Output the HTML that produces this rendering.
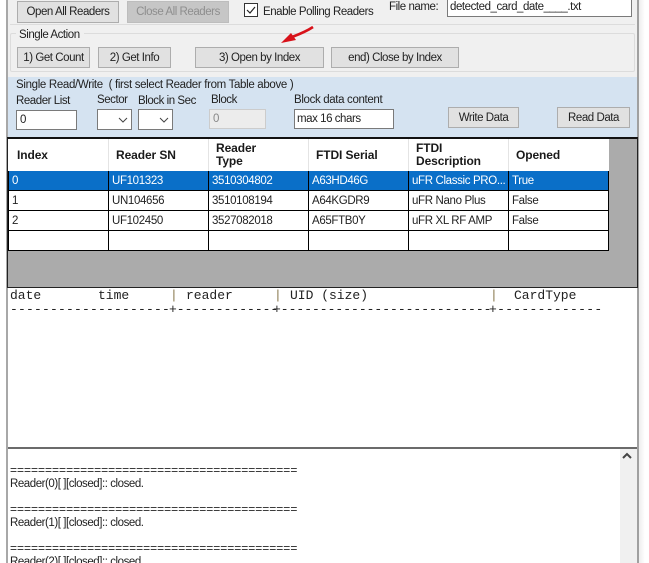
<!DOCTYPE html>
<html><head><meta charset="utf-8"><style>
html,body{margin:0;padding:0;background:#fff}
#r{position:relative;width:649px;height:563px;overflow:hidden;background:#fff;font-family:"Liberation Sans",sans-serif;font-size:11.5px;letter-spacing:-.45px;color:#222;filter:blur(.3px)}
#r div{position:absolute;box-sizing:border-box;white-space:nowrap}
.t{line-height:14px}
.b{background:#e1e1e1;border:1px solid #adadad;text-align:center;line-height:21px;color:#222}
.i{background:#fff;border:1px solid #7a7a7a;padding-left:3px;line-height:18px}
.s{background:#fff;border:1px solid #7a7a7a}
.h{font-weight:bold;font-size:12px;letter-spacing:-.1px;line-height:12.5px;color:#1a1a1a}
.c{font-size:11.5px;line-height:14px;letter-spacing:-.35px}
.m{font-family:"Liberation Mono",monospace;font-size:13px;letter-spacing:0;line-height:15px;color:#222;white-space:pre}
.p{color:#8a7a50}
.v{width:1px;background:#000}
.hl{height:1px;background:#000;left:8px;width:601px}
.g{line-height:13.5px;color:#222}
</style></head><body><div id="r">
<div style="left:0;top:0;width:6px;height:563px;background:#fff"></div>
<div style="left:6px;top:0;width:2px;height:563px;background:#a8a8a8"></div>
<div style="left:8px;top:0;width:629px;height:563px;background:#f0f0f0"></div>
<div style="left:637px;top:0;width:2px;height:563px;background:#a0a0a0"></div>
<div style="left:639px;top:0;width:6px;height:563px;background:linear-gradient(90deg,#eee,#fff)"></div>

<div style="left:10px;top:24px;width:625px;height:1px;background:#dcdcdc"></div>
<div class="b" style="left:17px;top:1px;width:102px;height:22px">Open All Readers</div>
<div class="b" style="left:127px;top:1px;width:102px;height:22px;background:#c6c6c6;border-color:#bdbdbd;color:#8e8e8e">Close All Readers</div>
<div style="left:244px;top:3px;width:14px;height:14px;background:#fff;border:1px solid #333"></div>
<svg style="position:absolute;left:244px;top:3px" width="14" height="14"><path d="M3 7l3 3 5-6" fill="none" stroke="#222" stroke-width="1.2"/></svg>
<div class="t" style="left:263px;top:5px">Enable Polling Readers</div>
<div class="t" style="left:389px;top:0px">File name:</div>
<div class="i" style="left:447px;top:-3px;width:185px;height:20px;padding-left:2px;line-height:18px">detected_card_date____.txt</div>

<div style="left:10px;top:33px;width:625px;height:39px;border:1px solid #dcdcdc;border-radius:2px"></div>
<div class="t" style="left:16px;top:28px;background:#f0f0f0;padding:0 4px 0 3px">Single Action</div>
<div class="b" style="left:17px;top:47px;width:73px;height:21px">1) Get Count</div>
<div class="b" style="left:98px;top:47px;width:73px;height:21px">2) Get Info</div>
<div class="b" style="left:195px;top:47px;width:129px;height:21px">3) Open by Index</div>
<div class="b" style="left:331px;top:47px;width:128px;height:21px">end) Close by Index</div>
<svg style="position:absolute;left:0;top:0" width="649" height="80"><path d="M281 43L291 33 296 40z" fill="#d8121a"/><path d="M292 37C300 34 307 31 313 27" fill="none" stroke="#d8121a" stroke-width="2.6"/></svg>

<div style="left:8px;top:77px;width:629px;height:60px;background:#d5e3f1"></div>
<div class="t" style="left:16px;top:78px;letter-spacing:-.33px">Single Read/Write &nbsp;( first select Reader from Table above )</div>
<div class="t" style="left:16px;top:94px">Reader List</div>
<div class="t" style="left:97px;top:93px">Sector</div>
<div class="t" style="left:138px;top:94px">Block in Sec</div>
<div class="t" style="left:211px;top:93px">Block</div>
<div class="t" style="left:294px;top:93px;letter-spacing:-.35px">Block data content</div>
<div class="i" style="left:16px;top:110px;width:61px;height:20px">0</div>
<div class="s" style="left:97px;top:109px;width:35px;height:21px"></div>
<div class="s" style="left:138px;top:109px;width:35px;height:21px"></div>
<svg style="position:absolute;left:97px;top:109px" width="76" height="21"><path d="M22 9l4 4 4-4M63 9l4 4 4-4" fill="none" stroke="#444"/></svg>
<div class="i" style="left:209px;top:109px;width:57px;height:20px;background:#ececec;border-color:#ccc;color:#888">0</div>
<div class="i" style="left:294px;top:109px;width:100px;height:20px;padding-left:2px">max 16 chars</div>
<div class="b" style="left:448px;top:107px;width:71px;height:21px">Write Data</div>
<div class="b" style="left:557px;top:107px;width:73px;height:21px">Read Data</div>

<div style="left:7px;top:137px;width:631px;height:151px;background:#ababab;border:1px solid #222;border-top:2px solid #111"></div>
<div style="left:8px;top:139px;width:601px;height:112px;background:#fff"></div>
<div style="left:8px;top:171px;width:601px;height:20px;background:#0a6fc8"></div>
<div class="hl" style="top:190px"></div><div class="hl" style="top:210px"></div><div class="hl" style="top:230px"></div><div class="hl" style="top:250px"></div>
<div class="v" style="left:108px;top:171px;height:80px"></div><div class="v" style="left:208px;top:171px;height:80px"></div><div class="v" style="left:308px;top:171px;height:80px"></div><div class="v" style="left:408px;top:171px;height:80px"></div><div class="v" style="left:508px;top:171px;height:80px"></div><div class="v" style="left:608px;top:171px;height:80px"></div>
<div class="v" style="left:108px;top:139px;height:32px;background:#e4e4e4"></div><div class="v" style="left:208px;top:139px;height:32px;background:#e4e4e4"></div><div class="v" style="left:308px;top:139px;height:32px;background:#e4e4e4"></div><div class="v" style="left:408px;top:139px;height:32px;background:#e4e4e4"></div><div class="v" style="left:508px;top:139px;height:32px;background:#e4e4e4"></div>
<div class="v" style="left:8px;top:171px;height:80px"></div>

<div class="h" style="left:17px;top:149px">Index</div>
<div class="h" style="left:116px;top:149px">Reader SN</div>
<div class="h" style="left:216px;top:142px">Reader<br>Type</div>
<div class="h" style="left:316px;top:149px">FTDI Serial</div>
<div class="h" style="left:416px;top:142px">FTDI<br>Description</div>
<div class="h" style="left:516px;top:149px">Opened</div>

<div class="c" style="left:12px;top:174px;color:#fff">0</div><div class="c" style="left:112px;top:174px;color:#fff">UF101323</div><div class="c" style="left:212px;top:174px;color:#fff">3510304802</div><div class="c" style="left:312px;top:174px;color:#fff">A63HD46G</div><div class="c" style="left:412px;top:174px;color:#fff">uFR Classic PRO...</div><div class="c" style="left:512px;top:174px;color:#fff">True</div>
<div class="c" style="left:12px;top:194px">1</div><div class="c" style="left:112px;top:194px">UN104656</div><div class="c" style="left:212px;top:194px">3510108194</div><div class="c" style="left:312px;top:194px">A64KGDR9</div><div class="c" style="left:412px;top:194px">uFR Nano Plus</div><div class="c" style="left:512px;top:194px">False</div>
<div class="c" style="left:12px;top:214px">2</div><div class="c" style="left:112px;top:214px">UF102450</div><div class="c" style="left:212px;top:214px">3527082018</div><div class="c" style="left:312px;top:214px">A65FTB0Y</div><div class="c" style="left:412px;top:214px">uFR XL RF AMP</div><div class="c" style="left:512px;top:214px">False</div>

<div style="left:8px;top:288px;width:629px;height:159px;background:#fff"></div>
<div class="m" style="left:10px;top:288px">date</div>
<div class="m" style="left:98px;top:288px">time</div>
<div class="m p" style="left:170px;top:288px">|</div>
<div class="m" style="left:186px;top:288px">reader</div>
<div class="m p" style="left:274px;top:288px">|</div>
<div class="m" style="left:290px;top:288px">UID (size)</div>
<div class="m p" style="left:490px;top:288px">|</div>
<div class="m" style="left:514px;top:288px">CardType</div>
<div class="m" style="left:10px;top:302px;letter-spacing:.2px">--------------------</div>
<div class="m" style="left:169px;top:302px">+-------------</div>
<div class="m" style="left:273px;top:302px">+---------------------------</div>
<div class="m" style="left:489px;top:302px;letter-spacing:.3px">+-------------</div>
<div style="left:8px;top:447px;width:629px;height:2px;background:#6b6b6b"></div>
<div style="left:8px;top:449px;width:629px;height:114px;background:#fff"></div>
<div style="left:620px;top:449px;width:17px;height:114px;background:#f0f0f0"></div>
<svg style="position:absolute;left:620px;top:449px" width="17" height="17"><path d="M3 9l4-4 4 4" fill="none" stroke="#444" stroke-width="2"/></svg>
<div class="g" style="left:10px;top:464px;letter-spacing:0;font-size:12px">=========================================</div>
<div class="g" style="left:10px;top:478px">Reader(0)[ ][closed]:: closed.</div>
<div class="g" style="left:10px;top:503px;letter-spacing:0;font-size:12px">=========================================</div>
<div class="g" style="left:10px;top:517px">Reader(1)[ ][closed]:: closed.</div>
<div class="g" style="left:10px;top:542px;letter-spacing:0;font-size:12px">=========================================</div>
<div class="g" style="left:10px;top:556px">Reader(2)[ ][closed]:: closed.</div>
</div></body></html>
